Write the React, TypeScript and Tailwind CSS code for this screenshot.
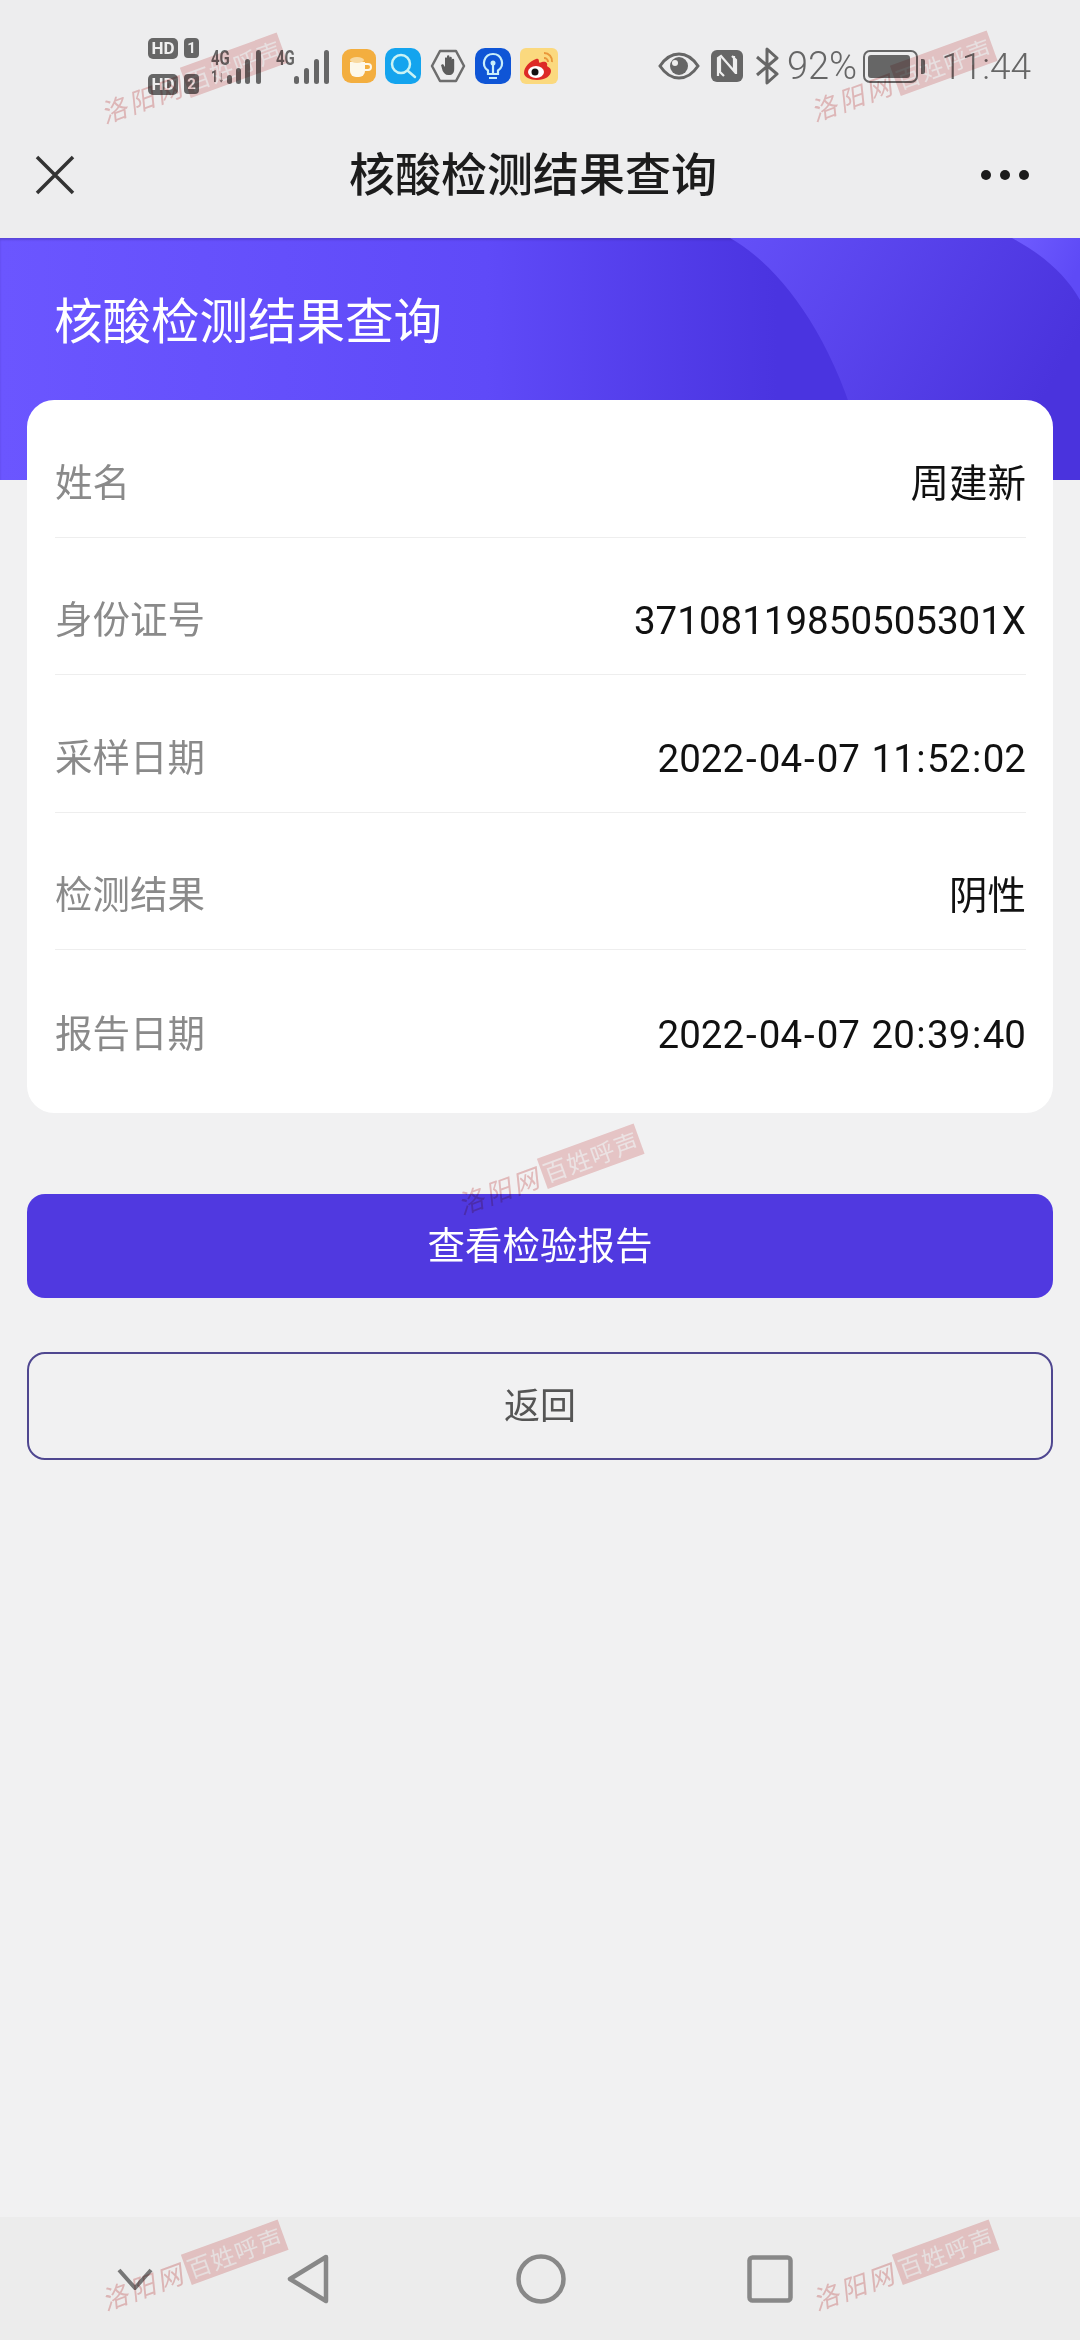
const CJK = "font-['Roboto','Noto_Sans_CJK_SC',sans-serif]";

function Watermark({ className }: { className: string }) {
  return (
    <div className={`pointer-events-none absolute z-30 flex h-[32px] w-[195px] -rotate-20 items-center mix-blend-multiply ${className}`}>
      <span className="w-[92px] text-center text-[26px] leading-none tracking-[3px] text-[#eec4c4] italic font-['Noto_Sans_CJK_SC',serif]">洛阳网</span>
      <span className="flex h-[32px] w-[103px] items-center justify-center bg-[#f3d0d0] text-[24px] leading-none tracking-[1px] text-[#f9f0f0] font-['Noto_Sans_CJK_SC',serif]">百姓呼声</span>
    </div>
  );
}

function Sim({ n }: { n: string }) {
  return (
    <div className="flex items-center gap-[6px]">
      <span className="flex h-[21px] w-[30px] items-center justify-center rounded-[5px] bg-[#666] text-[17px] leading-none font-bold text-[#eee] font-['Roboto',sans-serif]">HD</span>
      <span className="flex h-[20px] w-[15px] items-center justify-center rounded-[4px] bg-[#666] text-[15px] leading-none font-bold text-[#eee] font-['Roboto',sans-serif]">{n}</span>
    </div>
  );
}

function SignalOne() {
  return (
    <div className="relative h-[36px] w-[53px]">
      <span className="absolute -top-[1px] left-0 origin-left scale-x-75 text-[20px] leading-none font-bold text-[#666] font-['Roboto',sans-serif]">4G</span>
      <span className="absolute bottom-[0px] left-0 origin-left scale-x-75 text-[16px] leading-none font-bold text-[#666] font-['Roboto',sans-serif]">1↓</span>
      <svg width="53" height="36" viewBox="0 0 53 36" className="block">
        <rect x="16" y="26" width="5" height="9" rx="2.500" fill="#666" />
        <rect x="25" y="19" width="5" height="16" rx="2.500" fill="#666" />
        <rect x="34" y="10" width="5" height="25" rx="2.500" fill="#666" />
        <rect x="45" y="1" width="5" height="34" rx="2.500" fill="#666" />
      </svg>
    </div>
  );
}

function SignalTwo() {
  return (
    <div className="relative h-[36px] w-[54px]">
      <span className="absolute -top-[1px] left-0 origin-left scale-x-75 text-[20px] leading-none font-bold text-[#666] font-['Roboto',sans-serif]">4G</span>
      <svg width="54" height="36" viewBox="0 0 54 36" className="block">
        <rect x="18" y="27" width="5" height="8" rx="2.500" fill="#666" />
        <rect x="28" y="19" width="5" height="16" rx="2.500" fill="#666" />
        <rect x="38" y="10" width="5" height="25" rx="2.500" fill="#666" />
        <rect x="48" y="1" width="5" height="34" rx="2.500" fill="#666" />
      </svg>
    </div>
  );
}

function AppIcons() {
  return (
    <div className="flex items-center">
      <svg width="34" height="34" viewBox="0 0 34 34" className="ml-[12px]">
        <rect width="34" height="34" rx="9" fill="#f3ae3f" />
        <path d="M8 13h15v9a6 6 0 0 1-6 6h-3a6 6 0 0 1-6-6z" fill="#fdf8ea" />
        <path d="M23 15h3a2.5 2.5 0 0 1 0 6h-3" fill="none" stroke="#fdf8ea" strokeWidth="2" />
        <ellipse cx="15" cy="11" rx="7" ry="3" fill="#f8d9a0" />
      </svg>
      <svg width="36" height="36" viewBox="0 0 36 36" className="ml-[9px]">
        <rect width="36" height="36" rx="10" fill="#14a4ee" />
        <circle cx="16" cy="16" r="9" fill="none" stroke="#c9f3f5" strokeWidth="2.5" />
        <path d="M23 23l7 6" stroke="#c9f3f5" strokeWidth="2.5" strokeLinecap="round" />
      </svg>
      <svg width="36" height="34" viewBox="0 0 36 34" className="ml-[9px]">
        <path d="M10 2h16l8 15-8 15H10L2 17z" fill="none" stroke="#6d6d6d" strokeWidth="2.5" strokeLinejoin="round" />
        <path d="M11 16l2-1 2 3V9a1.200 1.200 0 0 1 2 0V7.500a1.200 1.200 0 0 1 2.400 0V9a1.200 1.200 0 0 1 2.400 0v2a1.200 1.200 0 0 1 2.400 0v9c0 4-2 6-5 6h-1c-3 0-4-2-5.500-4z" fill="#5c5c5c" />
      </svg>
      <svg width="36" height="36" viewBox="0 0 36 36" className="ml-[9px]">
        <rect width="36" height="36" rx="10" fill="#0f55d6" />
        <path d="M18 6a9 9 0 0 0-5 16.500V26h10v-3.500A9 9 0 0 0 18 6z" fill="none" stroke="#c9eefa" strokeWidth="2.200" />
        <path d="M14 30h8M18 14v11" stroke="#c9eefa" strokeWidth="2.200" />
        <circle cx="18" cy="15" r="2.500" fill="#c9eefa" />
      </svg>
      <svg width="38" height="36" viewBox="0 0 38 36" className="ml-[9px]">
        <rect width="38" height="36" rx="6" fill="#fbd97e" />
        <path d="M16 11c-6 2-12 8-12 14 0 4 6 7 13 7 8 0 14-4 14-9 0-3-3-4-4-5 1-3-1-5-5-4-2 1-3 1-3 0 0-3-1-4-3-3z" fill="#dd2a26" />
        <ellipse cx="16" cy="24" rx="8" ry="6" fill="#fff" />
        <circle cx="15" cy="24" r="3.500" fill="#111" />
        <path d="M24 5a8 8 0 0 1 8 9M24 10a4 4 0 0 1 4 4" fill="none" stroke="#e9973a" strokeWidth="2" />
      </svg>
    </div>
  );
}

function StatusBar() {
  return (
    <div className="flex h-[132px] items-center pr-[49px] pl-[148px]">
      <div className="flex flex-col gap-[15px]">
        <Sim n="1" />
        <Sim n="2" />
      </div>
      <div className="ml-[12px] flex items-center gap-[12px] pt-[2px]">
        <SignalOne />
        <SignalTwo />
      </div>
      <AppIcons />
      <div className="ml-auto flex items-center text-[#666]">
        <svg width="42" height="28" viewBox="0 0 42 28">
          <path d="M2 14C8 5 14 2 21 2s13 3 19 12c-6 9-12 12-19 12S8 23 2 14z" fill="none" stroke="#666" strokeWidth="3" />
          <circle cx="21" cy="14" r="9" fill="#666" />
          <circle cx="17" cy="11" r="3" fill="#eee" />
        </svg>
        <svg width="32" height="32" viewBox="0 0 32 32" className="ml-[11px]">
          <rect width="32" height="32" rx="6" fill="#666" />
          <path d="M7 26V8l3-2 13 15V6M9 8v14l4 4M25 24V10l-4-4" fill="none" stroke="#eee" strokeWidth="2.200" />
        </svg>
        <svg width="26" height="38" viewBox="0 0 26 38" className="ml-[11px]">
          <path d="M3 10l20 17-10 9V2l10 9L3 28" fill="none" stroke="#666" strokeWidth="3" strokeLinejoin="round" />
        </svg>
        <span className="ml-[7px] text-[38px] leading-none font-light font-['Roboto',sans-serif]">92%</span>
        <div className="ml-[6px] flex items-center">
          <div className="flex h-[33px] w-[55px] rounded-[7px] border-[2px] border-[#666] p-[3px]">
            <div className="h-full w-[42px] rounded-[3px] bg-[#666]" />
          </div>
          <div className="ml-[3px] h-[15px] w-[4px] rounded-r-[2px] bg-[#666]" />
        </div>
        <span className="ml-[16px] text-[37px] leading-none font-light font-['Roboto',sans-serif]">11:44</span>
      </div>
    </div>
  );
}

function NavBar() {
  return (
    <div className="mb-[18px] flex h-[88px] items-center justify-between pr-[51px] pl-[35px]">
      <svg width="40" height="40" viewBox="0 0 40 40" className="-mt-[3px]">
        <path d="M2 2l36 36M38 2L2 38" stroke="#333" strokeWidth="3.500" />
      </svg>
      <h1 className={`ml-[10px] -mt-[2px] text-[46px] leading-none font-medium text-[#1c1c1c] ${CJK}`}>核酸检测结果查询</h1>
      <div className="-mt-[3px] flex gap-[9px]">
        <span className="size-[10px] rounded-full bg-[#1c1c1c]" />
        <span className="size-[10px] rounded-full bg-[#1c1c1c]" />
        <span className="size-[10px] rounded-full bg-[#1c1c1c]" />
      </div>
    </div>
  );
}

function Banner() {
  return (
    <div className="relative h-[242px] overflow-hidden bg-[linear-gradient(90deg,#6b56ff_0%,#5f4af8_45%,#4a34e0_72%)] shadow-[inset_0_2px_2px_rgba(60,40,150,0.35)]">
      <svg width="1080" height="242" viewBox="0 0 1080 242" className="absolute inset-0">
        <defs>
          <linearGradient id="a" x1="0" x2="1" y1="0" y2="0.4">
            <stop offset="0" stopColor="#6450f8" />
            <stop offset="1" stopColor="#4a33dd" />
          </linearGradient>
          <linearGradient id="b" x1="0" x2="1" y1="0" y2="0.4">
            <stop offset="0" stopColor="#6f5cff" />
            <stop offset="1" stopColor="#5e4af6" />
          </linearGradient>
        </defs>
        <path d="M730 0C775 25 830 90 860 200V242H1080V0z" fill="url(#a)" />
        <path d="M1012 0C1040 15 1065 35 1080 62V0z" fill="url(#b)" />
      </svg>
      <h2 className={`relative pt-[55px] pl-[54px] text-[48.500px] leading-[60px] text-white ${CJK}`}>核酸检测结果查询</h2>
    </div>
  );
}

function Value({ text }: { text: string }) {
  return (
    <span className={`flex text-[38.5px] leading-[55px] whitespace-pre text-[#111] ${CJK}`}>
      {text.split("").map((c, i) =>
        c === "-" ? (
          <span key={i} className="mx-[2px]">{c}</span>
        ) : c === ":" ? (
          <span key={i} className="mx-[1.500px]">{c}</span>
        ) : c === " " ? (
          <span key={i} className="mx-[1px]">{c}</span>
        ) : (
          <span key={i}>{c}</span>
        )
      )}
    </span>
  );
}

const rows = [
  ["姓名", "周建新"],
  ["身份证号", "37108119850505301X"],
  ["采样日期", "2022-04-07 11:52:02"],
  ["检测结果", "阴性"],
  ["报告日期", "2022-04-07 20:39:40"],
];

function Card() {
  return (
    <div className="relative z-10 mx-[27px] -mt-[80px] rounded-[27px] bg-white pr-[27px] pb-[25px] pl-[28px]">
      {rows.map(([k, v], i) => (
        <div
          key={k}
          className={`flex h-[137.5px] items-end justify-between pb-[26px] ${i < rows.length - 1 ? "border-b border-[#eeeeee]" : ""}`}
        >
          <span className={`text-[37.5px] leading-[55px] text-[#8a8a8a] ${CJK}`}>{k}</span>
          <Value text={v} />
        </div>
      ))}
    </div>
  );
}

function BottomNav() {
  return (
    <div className="mt-auto flex h-[123px] items-center bg-[#ececec]">
      <div className="flex w-full items-center pl-[117px]">
        <svg width="36" height="22" viewBox="0 0 36 22">
          <path d="M2 2l16 18L34 2" fill="none" stroke="#777" strokeWidth="4" />
        </svg>
        <svg width="43" height="50" viewBox="0 0 43 50" className="ml-[134px]">
          <path d="M39 3L3 25l36 22z" fill="none" stroke="#888" strokeWidth="4.500" strokeLinejoin="round" />
        </svg>
        <svg width="50" height="50" viewBox="0 0 50 50" className="ml-[186px]">
          <circle cx="25" cy="25" r="22.500" fill="none" stroke="#888" strokeWidth="4.500" />
        </svg>
        <svg width="46" height="48" viewBox="0 0 46 48" className="ml-[181px]">
          <rect x="2.500" y="2.500" width="41" height="43" rx="3" fill="none" stroke="#888" strokeWidth="4.500" />
        </svg>
      </div>
    </div>
  );
}

export default function App() {
  return (
    <div className="relative flex h-[2340px] w-[1080px] flex-col overflow-hidden bg-[#f1f1f2]">
      <div className="bg-[#ededee]">
        <StatusBar />
        <NavBar />
      </div>
      <Banner />
      <Card />
      <div className="mx-[27px] mt-[81px] flex h-[104px] items-center justify-center rounded-[18px] bg-[#5039e0] pt-[2px]">
        <span className={`text-[37.5px] leading-none text-white ${CJK}`}>查看检验报告</span>
      </div>
      <div className="mx-[27px] mt-[54px] flex h-[108px] items-center justify-center rounded-[18px] border-2 border-[#4f4790] pt-[3px]">
        <span className={`text-[36px] leading-none text-[#555] ${CJK}`}>返回</span>
      </div>
      <BottomNav />
      <Watermark className="top-[65px] left-[93px]" />
      <Watermark className="top-[63px] left-[803px]" />
      <Watermark className="top-[1156px] left-[450px]" />
      <Watermark className="top-[2252px] left-[94px]" />
      <Watermark className="top-[2252px] left-[805px]" />
    </div>
  );
}
